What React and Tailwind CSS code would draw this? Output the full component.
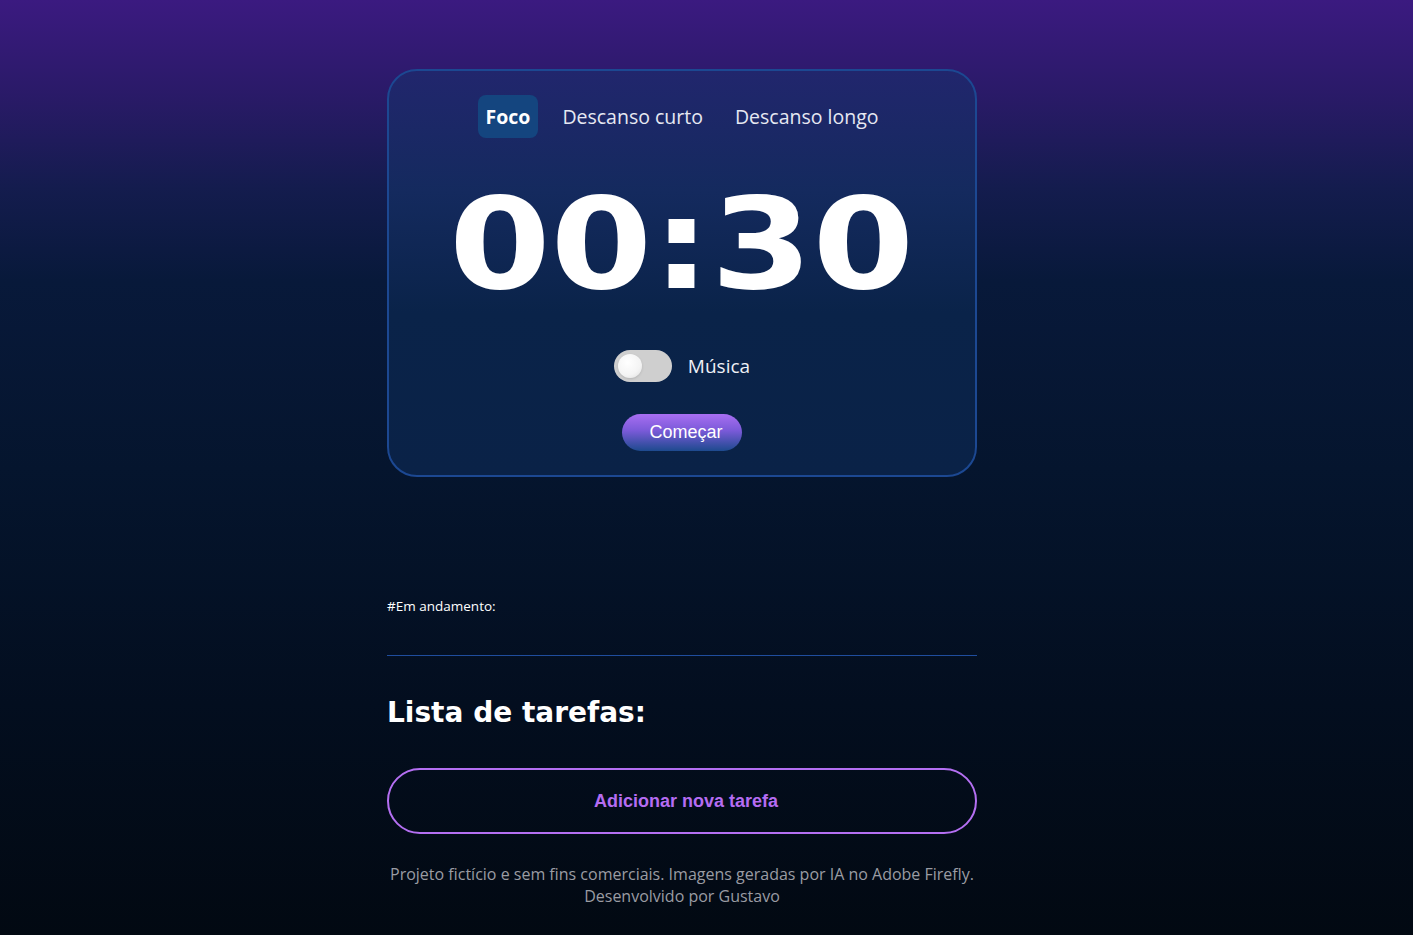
import { useState } from 'react'

const tabs = ['Foco', 'Descanso curto', 'Descanso longo']

export default function App() {
  const [active, setActive] = useState('Foco')
  const [music, setMusic] = useState(false)

  return (
    <div className="min-h-screen w-full bg-[linear-gradient(180deg,#3b1a80_0%,#2a1a68_10%,#141c4e_20%,#08193a_30%,#05152e_50%,#030e1f_75%,#020912_100%)] font-['Open_Sans',sans-serif] text-white">
      <main className="ml-[387px] flex w-[590px] flex-col pt-[69px] pb-[30px]">
        <section className="flex flex-col items-center rounded-[30px] border-2 border-[#1c4892] bg-[linear-gradient(180deg,#21266d_0%,#142a5e_30%,#0a2349_60%,#0a2247_100%)] pt-6 pb-6">
          <nav className="flex gap-4">
            {tabs.map(t => (
              <button key={t} onClick={() => setActive(t)}
                className={`rounded-lg px-2 py-[10px] text-[19.5px] leading-[23px] ${active === t ? 'bg-[#14457f] font-bold' : 'text-[#e6e8f2]'}`}>
                {t}
              </button>
            ))}
          </nav>

          <div className="mt-[44px] scale-x-[1.16] font-['DejaVu_Sans',sans-serif] text-[126px] font-bold leading-none">00:30</div>

          <div className="mt-[42px] flex items-center gap-4">
            <button onClick={() => setMusic(!music)}
              className={`flex h-8 w-[58px] items-center rounded-full px-1 ${music ? 'justify-end bg-[#8a5ae6]' : 'bg-[#cfcfcf]'}`}>
              <span className="h-6 w-6 rounded-full bg-[radial-gradient(circle_at_40%_35%,#ffffff_0%,#f4f4f4_60%,#dcdcdc_100%)] shadow-sm" />
            </button>
            <span className="text-[19px] text-[#eef0f6]">Música</span>
          </div>

          <button className="mt-8 h-[37px] w-[120px] rounded-full bg-[linear-gradient(180deg,#a86ef2_0%,#7a5ad8_45%,#1d4a8e_100%)] pl-2 font-['Liberation_Sans',sans-serif] text-[18px] text-white">
            Começar
          </button>
        </section>

        <p className="mt-[119px] text-[13.5px] text-white">#Em andamento:</p>
        <div className="mt-[39px] border-t border-[#1f4d9e]" />

        <h2 className="mt-[36px] font-['DejaVu_Sans',sans-serif] text-[28px] font-bold text-white">Lista de tarefas:</h2>

        <button className="mt-[34px] h-[66px] w-full rounded-full border-2 border-[#b46ff2] pl-2 font-['Liberation_Sans',sans-serif] text-[18px] font-bold text-[#b56cf2]">
          Adicionar nova tarefa
        </button>

        <footer className="mt-[29px] text-center text-[16px] leading-[22px] text-[#9a9ca3]">
          <p>Projeto fictício e sem fins comerciais. Imagens geradas por IA no Adobe Firefly.</p>
          <p>Desenvolvido por Gustavo</p>
        </footer>
      </main>
    </div>
  )
}
